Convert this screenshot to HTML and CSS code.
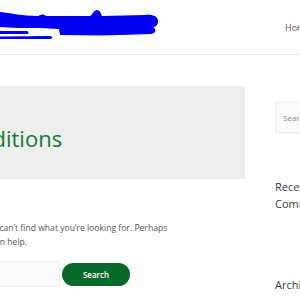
FILE: index.html
```html
<!DOCTYPE html>
<html lang="en">
<head>
    <meta charset="UTF-8">
    <title>Terms and Conditions</title>
    <link rel="stylesheet" href="styles.css">
</head>
<body>
    <header class="site-header">
        <a class="logo" href="#">
            <svg width="160" height="42" viewBox="0 0 160 42">
                <path fill="#0000f5" d="M0 11 C12 12 22 15 38 15 C41 13 44 13 46 15 L90 15 C93 13 94 9 97 9 C100 9 101 13 102 15 L145 14 C152 13 158 15 158 20 C158 24 156 26 153 26 C156 28 157 32 151 33 L120 34 C100 35 80 34 60 34 L59 28 L40 27 C25 27 10 27 0 26 Z"/>
                <path fill="#0000f5" d="M0 30 L27 30 C29 31 29 33 27 33 L0 33 Z"/>
                <path fill="#0000f5" d="M0 35.5 L50 35 C53 35 53 38 50 38 L0 38 Z"/>
            </svg>
        </a>
        <nav class="main-nav">
            <a href="#">Home</a>
        </nav>
    </header>

    <div class="site-content">
        <main class="primary">
            <div class="page-header">
                <h1 class="page-title">Terms and Conditions</h1>
            </div>
            <div class="page-content">
                <p>It seems we can&rsquo;t find what you&rsquo;re looking for. Perhaps<br>searching can help.</p>
                <form class="search-form">
                    <input type="search" class="search-field">
                    <button type="button" class="search-submit">Search</button>
                </form>
            </div>
        </main>

        <aside class="sidebar">
            <div class="widget">
                <input type="search" class="widget-search" placeholder="Search...">
            </div>
            <div class="widget widget-comments">
                <h2 class="widget-title">Recent Comments</h2>
            </div>
            <div class="widget">
                <h2 class="widget-title">Archives</h2>
            </div>
        </aside>
    </div>
</body>
</html>
```

FILE: styles.css
```css
body, html {
    margin: 0;
    padding: 0;
    font-family: "Open Sans", "Liberation Sans", sans-serif;
    color: #555555;
    overflow: hidden;
}
.site-header {
    display: flex;
    height: 55px;
    border-bottom: 1px solid #ececec;
    box-sizing: border-box;
}
.logo {
    display: block;
    width: 285px;
    flex: none;
    padding-top: 1px;
}
.logo svg {
    display: block;
}
.main-nav {
    display: flex;
    align-items: center;
    white-space: nowrap;
}
.main-nav a {
    color: #555555;
    text-decoration: none;
    font-size: 9px;
}
.site-content {
    display: flex;
    gap: 30px;
    padding-top: 31px;
}
.primary {
    flex: none;
    width: 445px;
    margin-left: -200px;
}
.page-header {
    background: #eeeeee;
    height: 93px;
    box-sizing: border-box;
    padding: 37px 0 0 37px;
}
.page-title {
    margin: 0;
    font-size: 22px;
    line-height: 30px;
    font-weight: 400;
    color: #0f7d32;
    white-space: nowrap;
}
.page-content {
    padding-left: 150px;
    padding-top: 42px;
}
.page-content p {
    margin: 0;
    font-size: 8.6px;
    line-height: 14px;
    white-space: nowrap;
}
.search-form {
    display: flex;
    align-items: center;
    gap: 2px;
    margin-top: 12px;
    margin-left: -85px;
}
.search-field {
    width: 195px;
    height: 26px;
    box-sizing: border-box;
    background: #fafafa;
    border: 1px solid #eeeeee;
    border-radius: 2px;
}
.search-submit {
    width: 68px;
    height: 23px;
    border: none;
    border-radius: 12px;
    background: #07692a;
    color: #ffffff;
    font-family: inherit;
    font-size: 8px;
    font-weight: 600;
}
.sidebar {
    flex: none;
    width: 80px;
    padding-top: 16px;
}
.widget-search {
    display: block;
    width: 100px;
    height: 31px;
    box-sizing: border-box;
    background: #fafafa;
    border: 1px solid #eeeeee;
    padding-left: 7px;
    font-family: inherit;
    font-size: 8px;
}
.widget-search::placeholder {
    color: #888888;
}
.widget-title {
    margin: 0;
    font-size: 11px;
    font-weight: 400;
    line-height: 17px;
    color: #3a3a3a;
}
.widget-comments {
    margin-top: 45px;
    height: 98px;
}
```
